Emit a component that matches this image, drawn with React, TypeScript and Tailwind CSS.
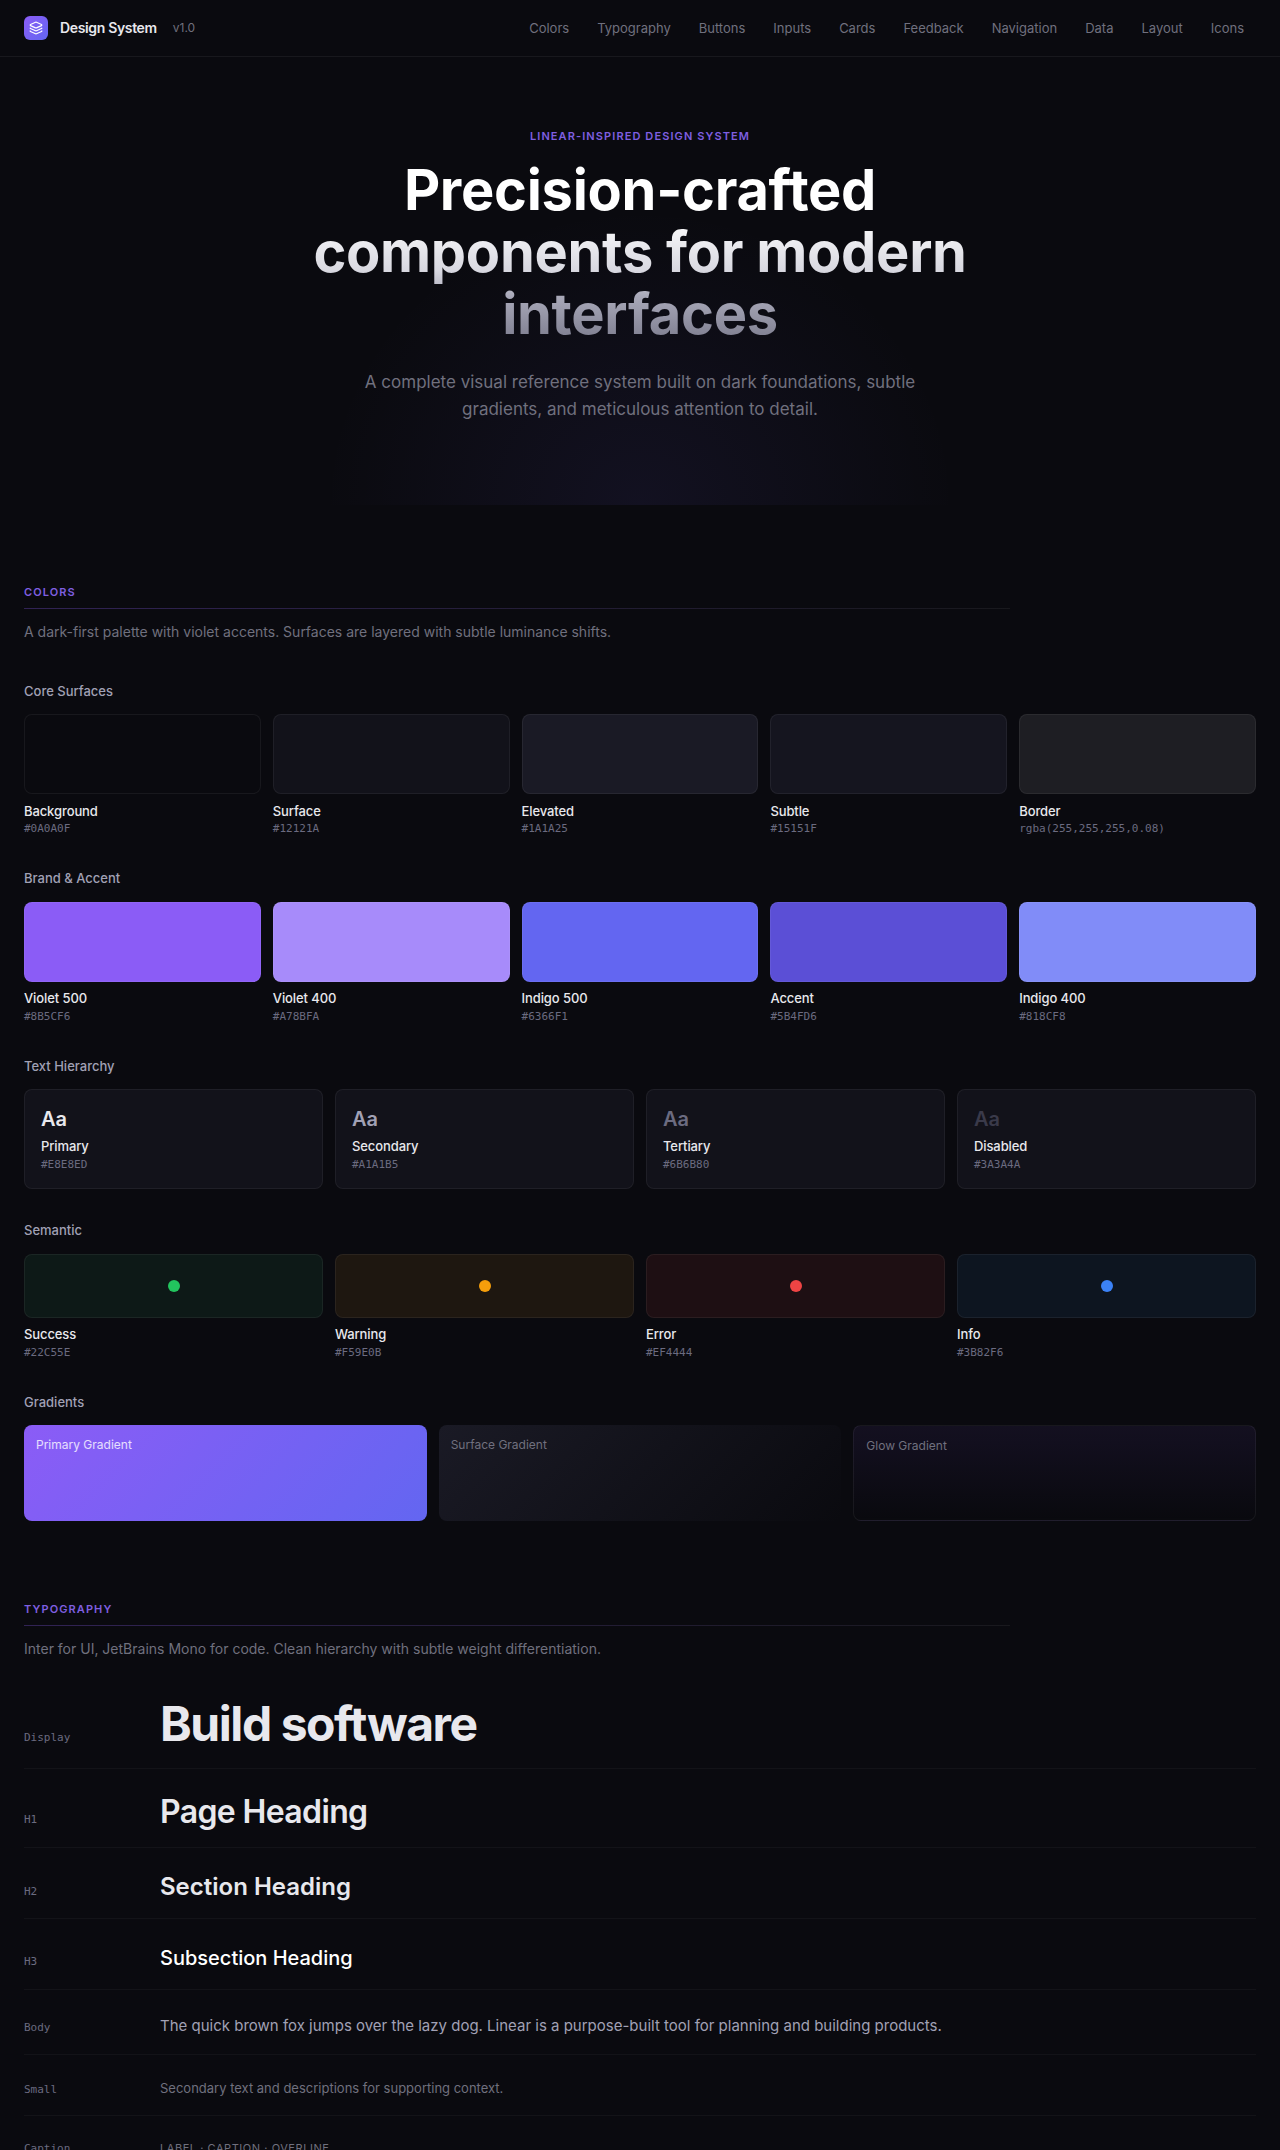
import { Layers } from "lucide-react";

const mono = "font-['DejaVu_Sans_Mono',monospace]";

const surfaces = [
  { name: "Background", hex: "#0A0A0F", cls: "bg-[#0a0a0f]" },
  { name: "Surface", hex: "#12121A", cls: "bg-[#12121a]" },
  { name: "Elevated", hex: "#1A1A25", cls: "bg-[#1a1a25]" },
  { name: "Subtle", hex: "#15151F", cls: "bg-[#15151f]" },
  { name: "Border", hex: "rgba(255,255,255,0.08)", cls: "bg-[#1e1e23]" },
];

const brand = [
  { name: "Violet 500", hex: "#8B5CF6", cls: "bg-[#8b5cf6]" },
  { name: "Violet 400", hex: "#A78BFA", cls: "bg-[#a78bfa]" },
  { name: "Indigo 500", hex: "#6366F1", cls: "bg-[#6366f1]" },
  { name: "Accent", hex: "#5B4FD6", cls: "bg-[#5b4fd6]" },
  { name: "Indigo 400", hex: "#818CF8", cls: "bg-[#818cf8]" },
];

const textLevels = [
  { name: "Primary", hex: "#E8E8ED", cls: "text-[#e8e8ed]" },
  { name: "Secondary", hex: "#A1A1B5", cls: "text-[#a1a1b5]" },
  { name: "Tertiary", hex: "#6B6B80", cls: "text-[#6b6b80]" },
  { name: "Disabled", hex: "#3A3A4A", cls: "text-[#3a3a4a]" },
];

const semantic = [
  { name: "Success", hex: "#22C55E", bg: "bg-[#0d1917]", dot: "bg-[#22c55e]" },
  { name: "Warning", hex: "#F59E0B", bg: "bg-[#1e1710]", dot: "bg-[#f59e0b]" },
  { name: "Error", hex: "#EF4444", bg: "bg-[#1e0f13]", dot: "bg-[#ef4444]" },
  { name: "Info", hex: "#3B82F6", bg: "bg-[#0d1520]", dot: "bg-[#3b82f6]" },
];

const navLinks = ["Colors", "Typography", "Buttons", "Inputs", "Cards", "Feedback", "Navigation", "Data", "Layout", "Icons"];

function SectionHead({ label, desc }: { label: string; desc: string }) {
  return (
    <div>
      <div className="text-[11px] leading-[16px] font-semibold tracking-[0.1em] text-[#7f5fe0] uppercase">{label}</div>
      <div className="mt-[8px] h-px w-[80%] bg-[linear-gradient(90deg,rgba(139,92,246,0.3),rgba(255,255,255,0.06))]" />
      <p className="mt-[12px] text-sm leading-[22px] text-[#70707e]">{desc}</p>
    </div>
  );
}

function GroupTitle({ children }: { children: string }) {
  return <h3 className="text-[13px] leading-[19.5px] font-medium text-[#a1a1b5]">{children}</h3>;
}

function Swatch({ name, hex, cls }: { name: string; hex: string; cls: string }) {
  return (
    <div>
      <div className={`h-[80px] rounded-lg border border-white/[0.06] ${cls}`} />
      <div className="mt-[7.5px] text-[13px] leading-[19.5px] font-medium tracking-[-0.1px] text-[#e8e8ed]">{name}</div>
      <div className={`${mono} text-[11px] leading-[16.5px] text-[#6b6b80]`}>{hex}</div>
    </div>
  );
}

function TypeRow({ label, children, pb = "pb-[16px]", last }: { label: string; children: React.ReactNode; pb?: string; last?: boolean }) {
  return (
    <div className={`flex items-baseline pt-[24px] ${pb} ${last ? "" : "border-b border-white/[0.04]"}`}>
      <div className={`${mono} w-[136px] shrink-0 text-[11px] text-[#6b6b80]`}>{label}</div>
      <div>{children}</div>
    </div>
  );
}

export default function App() {
  return (
    <div className="h-[2150px] overflow-hidden bg-[#0a0a0f] font-['Inter',sans-serif] text-[#e8e8ed]">
      <nav className="flex h-[57px] items-center justify-between border-b border-white/[0.06] px-[24px]">
        <div className="flex items-center">
          <div className="flex h-[24px] w-[24px] items-center justify-center rounded-md bg-[linear-gradient(135deg,#8b5cf6,#6366f1)]">
            <Layers size={14} className="text-white" strokeWidth={2} />
          </div>
          <span className="ml-[12px] text-sm font-semibold tracking-[-0.35px] text-[#e8e8ed]">Design System</span>
          <span className="ml-[16px] text-xs text-[#70707e]">v1.0</span>
        </div>
        <div className="flex gap-[4px]">
          {navLinks.map((link) => (
            <a key={link} className="px-[12px] py-[6px] text-[13px] leading-[20px] text-[#70707e]">{link}</a>
          ))}
        </div>
      </nav>

      <header className="relative h-[448px] overflow-hidden pt-[71px] text-center">
        <div className="absolute inset-x-[320px] bottom-0 h-[300px] bg-[radial-gradient(ellipse_at_50%_100%,rgba(120,100,245,0.08),transparent_70%)]" />
        <div className="relative">
          <div className="text-[11px] leading-[16px] font-semibold tracking-[0.1em] text-[#7f5fe0] uppercase">Linear-inspired Design System</div>
          <h1 className="mx-auto mt-[15px] w-[800px] bg-[linear-gradient(180deg,#ffffff_30%,#d8d8e0_60%,#a8a8b8_74%,#7a7a8c_100%)] bg-clip-text text-[56px] leading-[62px] font-bold tracking-[-0.3px] text-transparent">
            Precision-crafted components for modern interfaces
          </h1>
          <p className="mx-auto mt-[24px] w-[600px] text-[17px] leading-[27px] text-[#70707e]">
            A complete visual reference system built on dark foundations, subtle gradients, and meticulous attention to detail.
          </p>
        </div>
      </header>

      <main className="px-[24px]">
        <section className="pt-[79px]">
          <SectionHead label="Colors" desc="A dark-first palette with violet accents. Surfaces are layered with subtle luminance shifts." />
          <div className="mt-[38.5px]">
            <GroupTitle>Core Surfaces</GroupTitle>
            <div className="mt-[13px] grid grid-cols-5 gap-[12px]">
              {surfaces.map((s) => <Swatch key={s.name} {...s} />)}
            </div>
          </div>
          <div className="mt-[31.5px]">
            <GroupTitle>Brand &amp; Accent</GroupTitle>
            <div className="mt-[13px] grid grid-cols-5 gap-[12px]">
              {brand.map((s) => <Swatch key={s.name} {...s} />)}
            </div>
          </div>
          <div className="mt-[31.5px]">
            <GroupTitle>Text Hierarchy</GroupTitle>
            <div className="mt-[13px] grid grid-cols-4 gap-[12px]">
              {textLevels.map((t) => (
                <div key={t.name} className="h-[100px] rounded-lg border border-white/[0.06] bg-[#12121a] p-[16px]">
                  <div className={`text-[20px] leading-[26px] font-semibold ${t.cls}`}>Aa</div>
                  <div className="mt-[5px] text-[13px] leading-[19.5px] font-medium tracking-[-0.1px] text-[#e8e8ed]">{t.name}</div>
                  <div className={`${mono} text-[11px] leading-[15.5px] text-[#6b6b80]`}>{t.hex}</div>
                </div>
              ))}
            </div>
          </div>
          <div className="mt-[32px]">
            <GroupTitle>Semantic</GroupTitle>
            <div className="mt-[13px] grid grid-cols-4 gap-[12px]">
              {semantic.map((s) => (
                <div key={s.name}>
                  <div className={`flex h-[64px] items-center justify-center rounded-lg border border-white/[0.06] ${s.bg}`}>
                    <div className={`h-[12px] w-[12px] rounded-full ${s.dot}`} />
                  </div>
                  <div className="mt-[7.5px] text-[13px] leading-[19.5px] font-medium tracking-[-0.1px] text-[#e8e8ed]">{s.name}</div>
                  <div className={`${mono} text-[11px] leading-[16.5px] text-[#6b6b80]`}>{s.hex}</div>
                </div>
              ))}
            </div>
          </div>
          <div className="mt-[31.5px]">
            <GroupTitle>Gradients</GroupTitle>
            <div className="mt-[13px] grid grid-cols-3 gap-[12px]">
              <div className="h-[96px] rounded-lg bg-[linear-gradient(135deg,#8b5cf6,#6366f1)] p-[12px] text-xs text-white/80">Primary Gradient</div>
              <div className="h-[96px] rounded-lg bg-[linear-gradient(135deg,#1a1a25,#0a0a0f)] p-[12px] text-xs text-[#70707e]">Surface Gradient</div>
              <div className="h-[96px] rounded-lg border border-white/[0.06] bg-[linear-gradient(180deg,rgba(139,92,246,0.08),transparent)] p-[12px] text-xs text-[#70707e]">Glow Gradient</div>
            </div>
          </div>
        </section>

        <section className="pt-[80px]">
          <SectionHead label="Typography" desc="Inter for UI, JetBrains Mono for code. Clean hierarchy with subtle weight differentiation." />
          <div className="mt-[14px]">
            <TypeRow label="Display" pb="pb-[17px]"><div className="text-[48px] leading-[52.8px] font-bold tracking-[-0.03em]">Build software</div></TypeRow>
            <TypeRow label="H1"><div className="text-[32px] leading-[38.4px] font-semibold tracking-[-0.02em]">Page Heading</div></TypeRow>
            <TypeRow label="H2"><div className="text-[24px] leading-[30px] font-semibold">Section Heading</div></TypeRow>
            <TypeRow label="H3"><div className="text-[20px] leading-[30px] font-medium text-white">Subsection Heading</div></TypeRow>
            <TypeRow label="Body"><div className="text-[15px] leading-[24px] text-[#a1a1b5]">The quick brown fox jumps over the lazy dog. Linear is a purpose-built tool for planning and building products.</div></TypeRow>
            <TypeRow label="Small"><div className="text-[13px] leading-[19.5px] text-[#70707e]">Secondary text and descriptions for supporting context.</div></TypeRow>
            <TypeRow label="Caption" last><div className="text-[11px] leading-[16px] tracking-[0.05em] text-[#70707e] uppercase">Label · Caption · Overline</div></TypeRow>
          </div>
        </section>
      </main>
    </div>
  );
}
